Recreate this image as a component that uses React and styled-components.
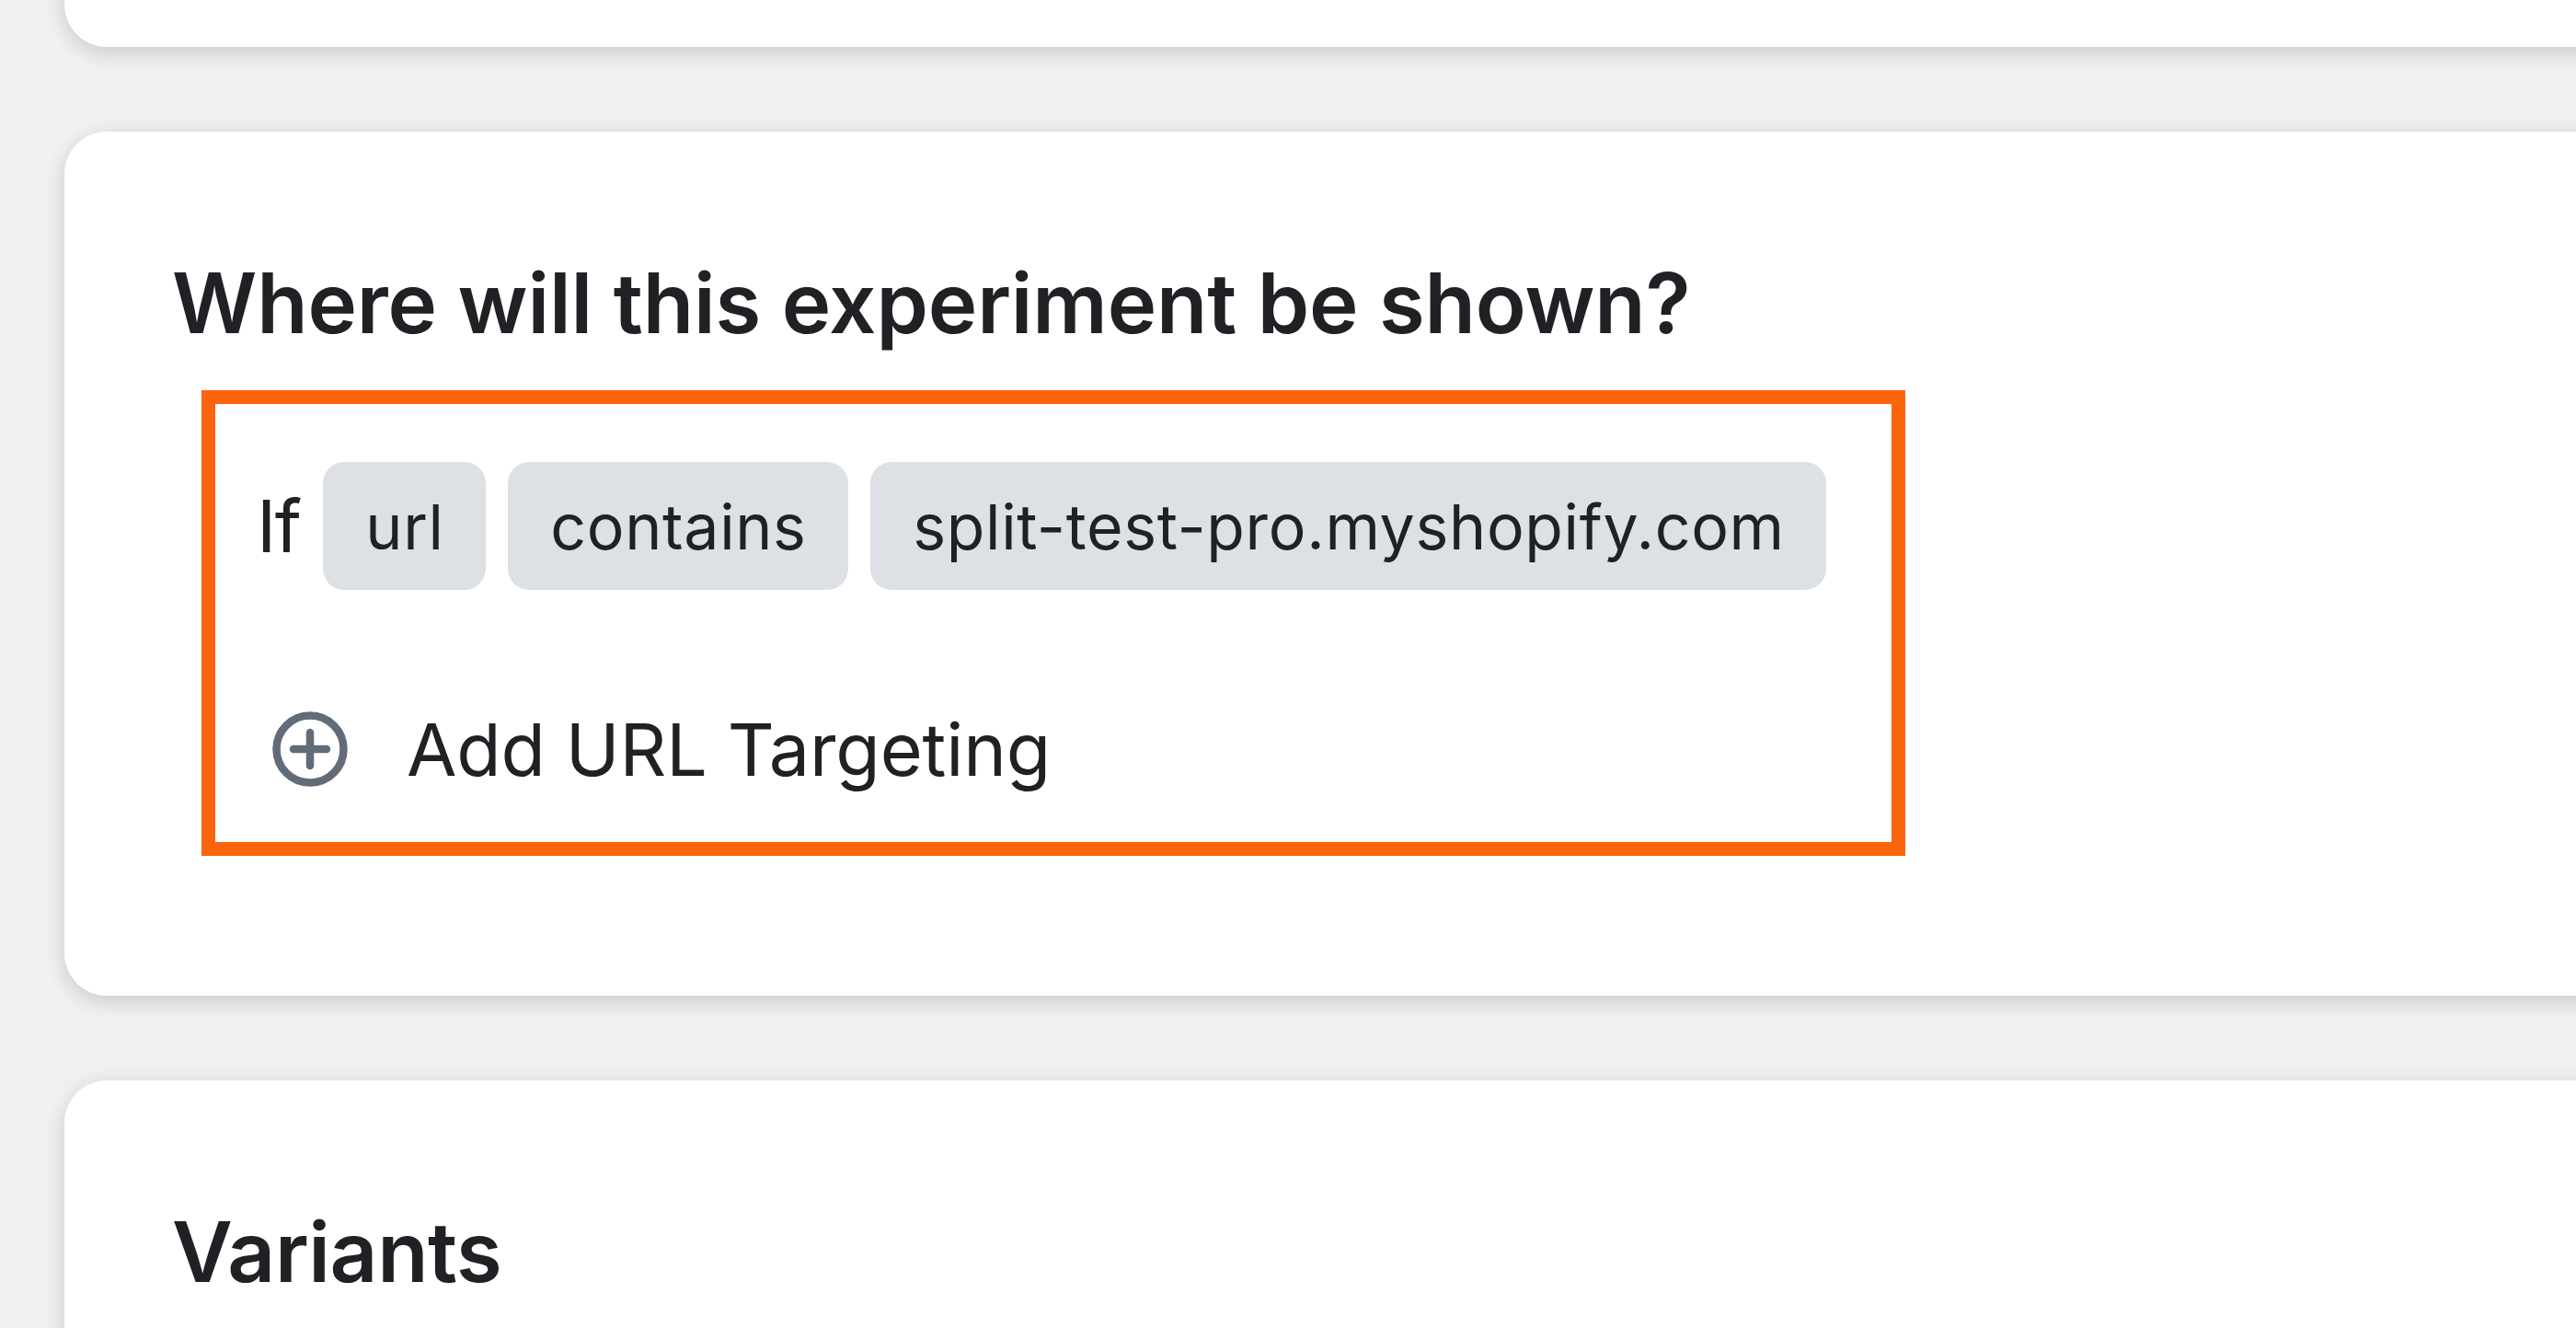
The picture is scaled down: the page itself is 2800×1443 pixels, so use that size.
import React from 'react';
import styled, { createGlobalStyle } from 'styled-components';

const GlobalStyle = createGlobalStyle`
  * {
    box-sizing: border-box;
  }

  body {
    margin: 0;
    background: #f1f1f1;
    color: #202124;
    font-family: Inter, 'Liberation Sans', sans-serif;
    overflow: hidden;
  }
`;

const Page = styled.main`
  width: 2800px;
  height: 1443px;
  padding-left: 70px;
  background: #f1f1f1;
  overflow: hidden;
`;

const CardStack = styled.div`
  display: flex;
  flex-direction: column;
  gap: 92px;
  width: 2850px;
  margin-top: -109px;
`;

const Card = styled.section`
  flex-shrink: 0;
  height: ${(props) => props.$height}px;
  padding: 114px 117px 0;
  border-radius: 46px;
  background: #fff;
  box-shadow: 0 0 29px rgba(23, 24, 24, 0.05), 0 8px 22px rgba(20, 20, 45, 0.13);
`;

const CardTitle = styled.h2`
  margin: 0;
  font-size: 90.5px;
  font-weight: 600;
  line-height: 144px;
  letter-spacing: ${(props) => props.$tracking || '-0.15px'};
  white-space: nowrap;
`;

const RuleBox = styled.div`
  width: 1852px;
  height: 506px;
  margin: 23px 0 0 32px;
  padding: 63px 0 0 45px;
  border: 15px solid #fb640a;
`;

const RuleRow = styled.div`
  display: flex;
  align-items: center;
  height: 139px;
  gap: 24px;
`;

const RuleWord = styled.span`
  width: 48px;
  font-size: 79px;
  line-height: 139px;
  letter-spacing: -1.5px;
  white-space: nowrap;
`;

const Chip = styled.span`
  display: flex;
  align-items: center;
  justify-content: center;
  width: ${(props) => props.$width}px;
  height: 139px;
  padding: 1px 0 0 1px;
  border-radius: 23px;
  background: #dde0e4;
  font-size: 68px;
  letter-spacing: 0.65px;
  white-space: nowrap;
`;

const AddButton = styled.button`
  display: flex;
  align-items: center;
  gap: 64px;
  height: 120px;
  margin: 113px 0 0 17px;
  padding: 0;
  border: 0;
  background: none;
  color: inherit;
  font-family: inherit;
  font-size: 79px;
  letter-spacing: -0.15px;
  white-space: nowrap;
`;

const PlusIcon = styled.svg`
  flex-shrink: 0;
  width: 82px;
  height: 82px;
  fill: none;
  stroke: #626c79;
  stroke-width: 8.5;
  stroke-linecap: round;
`;

const App = () => {
  return (
    <>
      <GlobalStyle />
      <Page>
        <CardStack>
          <Card $height={160} />

          <Card $height={939}>
            <CardTitle>Where will this experiment be shown?</CardTitle>
            <RuleBox>
              <RuleRow>
                <RuleWord>If</RuleWord>
                <Chip $width={177}>url</Chip>
                <Chip $width={370}>contains</Chip>
                <Chip $width={1039}>split-test-pro.myshopify.com</Chip>
              </RuleRow>
              <AddButton type="button">
                <PlusIcon viewBox="0 0 82 82" aria-hidden="true">
                  <circle cx="41" cy="41" r="36.5" />
                  <path d="M41 23v36M23 41h36" />
                </PlusIcon>
                Add URL Targeting
              </AddButton>
            </RuleBox>
          </Card>

          <Card $height={939}>
            <CardTitle $tracking="-0.4px">Variants</CardTitle>
          </Card>
        </CardStack>
      </Page>
    </>
  );
};

export default App;
